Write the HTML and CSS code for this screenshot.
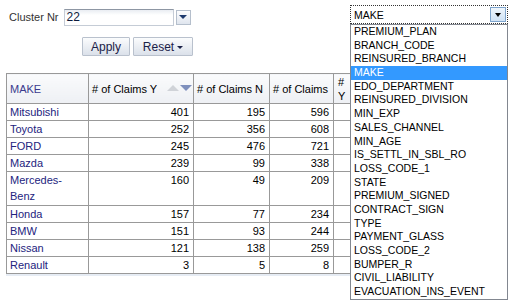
FILE: index.html
```html
<!DOCTYPE html>
<html lang="en">
<head>
    <meta charset="UTF-8">
    <title>Claims by Make</title>
    <link rel="stylesheet" href="styles.css">
</head>
<body>
    <div class="page">
        <div class="prompt">
            <label class="prompt-label">Cluster Nr</label>
            <div class="combo">
                <div class="combo-input">22</div>
                <div class="combo-btn"><span class="tri-down"></span></div>
            </div>
        </div>
        <div class="actions">
            <button class="btn">Apply</button>
            <button class="btn btn-reset">Reset <span class="tri-small"></span></button>
        </div>

        <table class="pivot">
            <colgroup>
                <col class="c-make">
                <col class="c-y">
                <col class="c-n">
                <col class="c-all">
                <col class="c-more">
            </colgroup>
            <thead>
                <tr>
                    <th class="make-head">MAKE</th>
                    <th>
                        <div class="head-sort">
                            <span># of Claims Y</span>
                            <span class="sort"><span class="sort-up"></span><span class="sort-down"></span></span>
                        </div>
                    </th>
                    <th># of Claims N</th>
                    <th># of Claims</th>
                    <th class="cut">#<br>Y</th>
                </tr>
            </thead>
            <tbody>
                <tr><td class="make">Mitsubishi</td><td>401</td><td>195</td><td>596</td><td></td></tr>
                <tr><td class="make">Toyota</td><td>252</td><td>356</td><td>608</td><td></td></tr>
                <tr><td class="make">FORD</td><td>245</td><td>476</td><td>721</td><td></td></tr>
                <tr><td class="make">Mazda</td><td>239</td><td>99</td><td>338</td><td></td></tr>
                <tr class="tall"><td class="make">Mercedes-<br>Benz</td><td>160</td><td>49</td><td>209</td><td></td></tr>
                <tr><td class="make">Honda</td><td>157</td><td>77</td><td>234</td><td></td></tr>
                <tr><td class="make">BMW</td><td>151</td><td>93</td><td>244</td><td></td></tr>
                <tr><td class="make">Nissan</td><td>121</td><td>138</td><td>259</td><td></td></tr>
                <tr><td class="make">Renault</td><td>3</td><td>5</td><td>8</td><td></td></tr>
            </tbody>
        </table>
        <div class="table-shadow"></div>

        <!-- open column selector, lies over the table -->
        <div class="selector">
            <div class="selector-box">
                <span class="selector-value">MAKE</span>
                <span class="selector-btn"><span class="tri-black"></span></span>
            </div>
            <ul class="selector-list">
                <li>PREMIUM_PLAN</li>
                <li>BRANCH_CODE</li>
                <li>REINSURED_BRANCH</li>
                <li class="selected">MAKE</li>
                <li>EDO_DEPARTMENT</li>
                <li>REINSURED_DIVISION</li>
                <li>MIN_EXP</li>
                <li>SALES_CHANNEL</li>
                <li>MIN_AGE</li>
                <li>IS_SETTL_IN_SBL_RO</li>
                <li>LOSS_CODE_1</li>
                <li>STATE</li>
                <li>PREMIUM_SIGNED</li>
                <li>CONTRACT_SIGN</li>
                <li>TYPE</li>
                <li>PAYMENT_GLASS</li>
                <li>LOSS_CODE_2</li>
                <li>BUMPER_R</li>
                <li>CIVIL_LIABILITY</li>
                <li>EVACUATION_INS_EVENT</li>
            </ul>
        </div>
    </div>
</body>
</html>
```
FILE: styles.css
```css
body {
    margin: 0;
    padding: 0;
    background: #fff;
    font-family: 'Liberation Sans', Arial, sans-serif;
    font-size: 11px;
    color: #000;
    overflow: hidden;
}

.page {
    position: relative;
    width: 516px;
    height: 302px;
    overflow: hidden;
}

.prompt {
    display: flex;
    align-items: center;
    padding: 8px 0 0 9px;
    height: 18px;
}

.prompt-label {
    color: #333;
    margin-right: 5px;
}

.combo {
    display: flex;
    align-items: center;
    gap: 2px;
}

.combo-input {
    width: 106px;
    height: 15px;
    line-height: 15px;
    padding-left: 2px;
    border: 1px solid #c5ccd6;
    border-top-color: #8d96a3;
    background: linear-gradient(#e9edf2, #fff 5px);
    color: #0c1a3c;
    font-size: 12px;
}

.combo-btn {
    width: 13px;
    height: 13px;
    border: 1px solid #b5bfcc;
    background: linear-gradient(#fdfdfe, #dfe5ee);
    display: flex;
    align-items: center;
    justify-content: center;
}

.tri-down {
    width: 0;
    height: 0;
    border-left: 4px solid transparent;
    border-right: 4px solid transparent;
    border-top: 4px solid #1e3a6e;
}

.actions {
    display: flex;
    gap: 3px;
    padding: 11px 0 0 82px;
}

.btn {
    font-family: 'Liberation Sans', Arial, sans-serif;
    font-size: 12px;
    color: #1b2148;
    height: 19px;
    width: 48px;
    padding: 0;
    border: 1px solid #b9c1cd;
    border-radius: 1px;
    background: linear-gradient(#fbfcfd, #dbe1ea);
    display: flex;
    align-items: center;
    justify-content: center;
}

.btn-reset {
    width: 60px;
    gap: 3px;
}

.tri-small {
    width: 0;
    height: 0;
    border-left: 3.5px solid transparent;
    border-right: 3.5px solid transparent;
    border-top: 3.5px solid #1b2148;
    margin-top: 2px;
}

.pivot {
    margin: 17px 0 0 6px;
    border-collapse: collapse;
    table-layout: fixed;
    width: 367px;
}

.c-make { width: 82px; }
.c-y { width: 105px; }
.c-n { width: 76px; }
.c-all { width: 64px; }
.c-more { width: 40px; }

.pivot th,
.pivot td {
    border: 1px solid #999;
    padding: 0 4px 0 3px;
    height: 16px;
    line-height: 16px;
    white-space: nowrap;
    overflow: hidden;
}

.pivot th {
    height: 29px;
    font-weight: normal;
    text-align: left;
    background: linear-gradient(#fafbfc, #eef0f4);
    line-height: 14px;
}

.pivot th.make-head {
    color: #3b3b8e;
}

.pivot th.cut {
    white-space: normal;
    padding-left: 4px;
}

.head-sort {
    display: flex;
    align-items: center;
    justify-content: space-between;
    margin-right: -3px;
}

.sort {
    display: flex;
    align-items: center;
    gap: 1px;
    margin-top: -2px;
}

.sort-up {
    width: 0;
    height: 0;
    border-left: 6px solid transparent;
    border-right: 6px solid transparent;
    border-bottom: 6px solid #d0d3d8;
}

.sort-down {
    width: 0;
    height: 0;
    border-left: 6px solid transparent;
    border-right: 6px solid transparent;
    border-top: 6px solid #7f90bd;
}

.pivot td {
    text-align: right;
}

.pivot td.make {
    text-align: left;
    color: #23237e;
}

.pivot tr.tall td {
    height: 33px;
    vertical-align: top;
}

.table-shadow {
    margin-left: 6px;
    width: 367px;
    height: 2px;
    background: #e6ecf4;
}

.selector {
    position: absolute;
    left: 350px;
    top: 5px;
    width: 158px;
    font-size: 10.5px;
}

.selector-box {
    height: 17px;
    border: 1px dotted #333;
    display: flex;
    align-items: center;
    justify-content: space-between;
    padding: 0 1px 0 3px;
    background: #fff;
}

.selector-value {
    color: #000;
}

.selector-btn {
    width: 16px;
    height: 15px;
    border: 1px solid #7ea4cc;
    background: linear-gradient(#eef5fc, #cfe2f5);
    display: flex;
    align-items: center;
    justify-content: center;
    box-sizing: border-box;
}

.tri-black {
    width: 0;
    height: 0;
    border-left: 3.5px solid transparent;
    border-right: 3.5px solid transparent;
    border-top: 4px solid #000;
}

.selector-list {
    list-style: none;
    margin: 0;
    padding: 0;
    border: 1px solid #828790;
    background: #fff;
}

.selector-list li {
    height: 13.7px;
    line-height: 13.7px;
    padding-left: 3px;
    white-space: nowrap;
}

.selector-list li.selected {
    background: #3399ff;
    color: #fff;
}
```
